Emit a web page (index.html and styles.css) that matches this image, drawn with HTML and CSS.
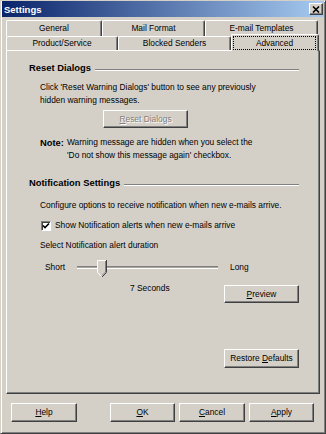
FILE: index.html
```html
<!DOCTYPE html>
<html>
<head>
<meta charset="utf-8">
<title>Settings</title>
<link rel="stylesheet" href="styles.css">
</head>
<body>
<div class="window">
  <div class="titlebar">
    <span class="title">Settings</span>
    <span class="close"><svg width="8" height="7" viewBox="0 0 8 7"><path d="M1 0.5L7 6.5M7 0.5L1 6.5" stroke="#000" stroke-width="1.6"/></svg></span>
  </div>
  <div class="tabs">
    <div class="tabrow back">
      <div class="tab t-general">General</div>
      <div class="tab t-mail">Mail Format</div>
      <div class="tab t-templates">E-mail Templates</div>
    </div>
    <div class="tabrow front">
      <div class="tab t-product">Product/Service</div>
      <div class="tab t-blocked">Blocked Senders</div>
      <div class="tab t-advanced selected"><span class="focus">Advanced</span></div>
    </div>
  </div>
  <div class="panel">
    <div class="section-head"><span>Reset Dialogs</span><span class="rule"></span></div>
    <p class="para">Click 'Reset Warning Dialogs' button to see any previously<br>hidden warning messages.</p>
    <div class="btn disabled reset"><span><u>R</u>eset Dialogs</span></div>
    <div class="note"><b class="note-label">Note:</b><span>Warning message are hidden when you select the<br>'Do not show this message again' checkbox.</span></div>
    <div class="section-head head2"><span>Notification Settings</span><span class="rule"></span></div>
    <p class="para config">Configure options to receive notification when new e-mails arrive.</p>
    <div class="check-row">
      <span class="checkbox"><svg width="8" height="8" viewBox="0 0 8 8"><path d="M1 3.5L3 5.5L7 1.5" fill="none" stroke="#000" stroke-width="1.6"/></svg></span>
      <span>Show Notification alerts when new e-mails arrive</span>
    </div>
    <p class="para select">Select Notification alert duration</p>
    <div class="slider-row">
      <span class="short">Short</span>
      <span class="track">
        <svg class="thumb" width="10" height="17" viewBox="0 0 10 17">
          <path d="M0 0H10V12L5 17L0 12Z" fill="#d4d0c8"/>
          <path d="M0.5 12.5V0.5H9.5" fill="none" stroke="#fff"/>
          <path d="M0.5 12.5L4.5 16.5" fill="none" stroke="#fff"/>
          <path d="M9.5 0V12.5L5 17" fill="none" stroke="#404040"/>
          <path d="M8.5 1V12L5 15.5" fill="none" stroke="#808080"/>
        </svg>
      </span>
      <span class="long">Long</span>
    </div>
    <div class="seconds-row">
      <span class="seconds">7 Seconds</span>
      <div class="btn preview"><span><u>P</u>review</span></div>
    </div>
    <div class="btn restore"><span>Restore <u>D</u>efaults</span></div>
  </div>
  <div class="footer">
    <div class="btn help"><span><u>H</u>elp</span></div>
    <div class="btn ok"><span><u>O</u>K</span></div>
    <div class="btn cancel"><span><u>C</u>ancel</span></div>
    <div class="btn apply"><span><u>A</u>pply</span></div>
  </div>
</div>
</body>
</html>
```
FILE: styles.css
```css
* { box-sizing: border-box; }

body {
  margin: 0;
  background: #d4d0c8;
  font-family: "Liberation Sans", Arial, sans-serif;
  font-size: 8.4px;
  line-height: 13px;
  color: #000;
}

.window {
  width: 326px;
  height: 434px;
  border: 1px solid;
  border-color: #d4d0c8 #404040 #404040 #d4d0c8;
  box-shadow: inset 1px 1px #fff, inset -1px -1px #808080;
  padding: 0 1px 1px 1px;
  display: flex;
  flex-direction: column;
}

.titlebar {
  height: 16px;
  background: linear-gradient(to right, #0a246a, #a6caf0);
  display: flex;
  align-items: center;
  justify-content: space-between;
  padding: 0 1px 0 2px;
}

.title {
  color: #fff;
  font-weight: bold;
  font-size: 9.5px;
}

.close {
  width: 14px;
  height: 12px;
  background: #d4d0c8;
  border: 1px solid;
  border-color: #fff #404040 #404040 #fff;
  box-shadow: inset -1px -1px #808080;
  display: flex;
  align-items: center;
  justify-content: center;
}

.tabs {
  margin-top: 3px;
  padding-left: 4px;
}

.tabrow { display: flex; }
.tabrow.back { height: 16px; }
.tabrow.front { height: 14px; }

.tab {
  display: flex;
  align-items: center;
  justify-content: center;
  background: #d4d0c8;
  border-top: 1px solid #fff;
  border-left: 1px solid #fff;
  border-right: 1px solid #404040;
  box-shadow: inset -1px 0 #808080;
  border-radius: 2px 2px 0 0;
}

.back .tab { height: 16px; padding-bottom: 1px; }
.front .tab { height: 14px; }

.tab.selected {
  height: 17px;
  margin-top: -2px;
  padding: 1px 2px 1px 1px;
  position: relative;
  z-index: 1;
}

.focus {
  flex: 1;
  align-self: stretch;
  border: 1px dotted #000;
  display: flex;
  align-items: center;
  justify-content: center;
}

.t-general { width: 96px; }
.t-mail { width: 103px; }
.t-templates { width: 113px; }
.t-product { width: 112px; }
.t-blocked { width: 113px; }
.t-advanced { width: 88px; }

.panel {
  margin-left: 4px;
  width: 314px;
  height: 344px;
  border: 1px solid;
  border-color: #fff #404040 #404040 #fff;
  box-shadow: inset -1px -1px #808080;
  padding: 10px 20px 0 22px;
  display: flex;
  flex-direction: column;
}

.section-head {
  display: flex;
  align-items: center;
  font-weight: bold;
  font-size: 9.4px;
}

.section-head.head2 { margin-top: 14px; }

.rule {
  flex: 1;
  margin-left: 4px;
  margin-top: 4px;
  border-top: 1px solid #808080;
  border-bottom: 1px solid #fff;
}

.para { margin: 7px 0 0 11px; }
.para.config { margin-top: 10px; }

.btn {
  display: flex;
  align-items: center;
  justify-content: center;
  height: 19px;
  background: #d4d0c8;
  border: 1px solid;
  border-color: #fff #404040 #404040 #fff;
  box-shadow: inset -1px -1px #808080;
}

.btn.disabled { color: #808080; text-shadow: 1px 1px #fff; }

.reset {
  margin: 3px 0 0 74px;
  width: 85px;
  height: 18px;
}

.note {
  display: flex;
  margin: 8px 0 0 11px;
}

.note-label {
  width: 27px;
  font-size: 9.4px;
}

.check-row {
  display: flex;
  align-items: center;
  margin: 7px 0 0 12px;
}

.checkbox {
  width: 10px;
  height: 10px;
  margin-right: 4px;
  background: #fff;
  border: 1px solid;
  border-color: #808080 #fff #fff #808080;
  box-shadow: inset 1px 1px #404040;
  display: flex;
  align-items: center;
  justify-content: center;
}

.slider-row {
  display: flex;
  align-items: center;
  height: 16px;
  margin: 7px 0 0 16px;
}

.short { width: 32px; }

.track {
  width: 141px;
  height: 3px;
  border-top: 1px solid #808080;
  border-bottom: 1px solid #fff;
  background: #a8a49c;
  position: relative;
}

.thumb {
  position: absolute;
  left: 20px;
  top: -7px;
}

.long { margin-left: 12px; }

.seconds-row {
  display: flex;
  margin-top: 7px;
}

.seconds { margin-left: 101px; }

.preview {
  margin: 3px 0 0 auto;
  width: 75px;
  height: 18px;
}

.restore {
  align-self: flex-end;
  margin-top: 46px;
  width: 75px;
}

.footer {
  display: flex;
  margin-top: 9px;
  padding-left: 9px;
}

.help { width: 66px; }
.ok { width: 65px; margin-left: 33px; }
.cancel { width: 66px; margin-left: 4px; }
.apply { width: 65px; margin-left: 4px; }
```
